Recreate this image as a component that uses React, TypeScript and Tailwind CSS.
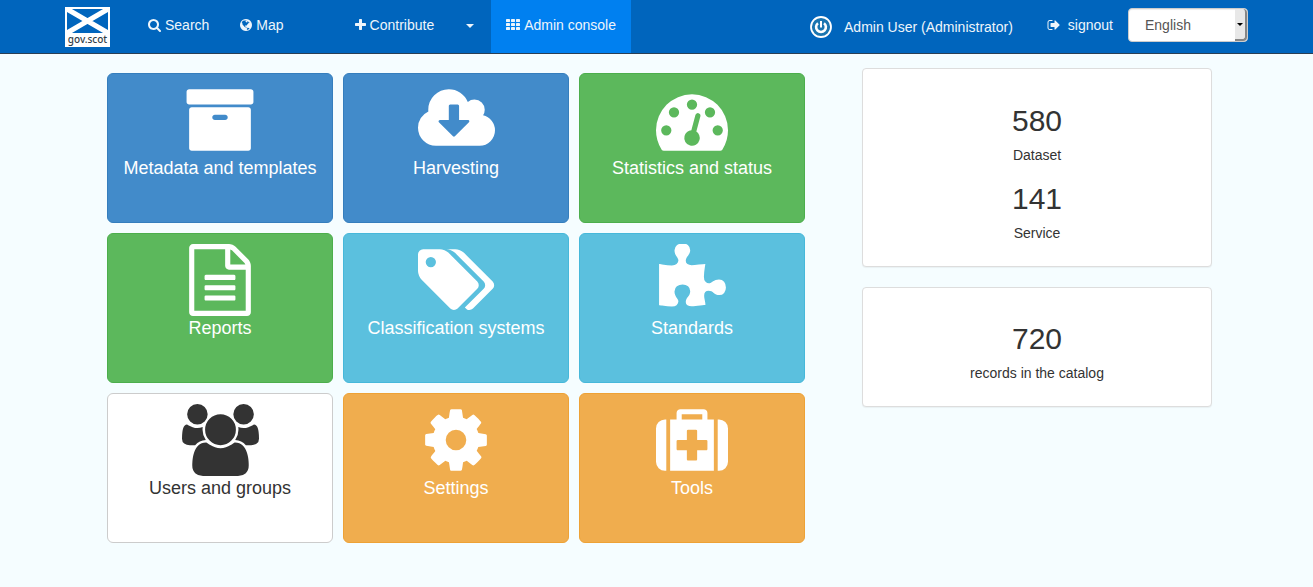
import type { ReactNode } from "react";

type Glyph = { box: string; d: string };

const glyphs = {
  search: {
    box: "64 0 1664 1792",
    d: "M1216 832q0-185-131.5-316.5t-316.5-131.5-316.5 131.5-131.5 316.5 131.5 316.5 316.5 131.5 316.5-131.5 131.5-316.5zm512 832q0 52-38 90t-90 38q-54 0-90-38l-343-342q-179 124-399 124-143 0-273.5-55.5t-225-150-150-225-55.5-273.5 55.5-273.5 150-225 225-150 273.5-55.5 273.5 55.5 225 150 150 225 55.5 273.5q0 220-124 399l343 343q37 37 37 90z",
  },
  globe: {
    box: "128 0 1536 1792",
    d: "M896 128q209 0 385.5 103t279.5 279.5 103 385.5-103 385.5-279.5 279.5-385.5 103-385.5-103-279.5-279.5-103-385.5 103-385.5 279.5-279.5 385.5-103zm274 521q-2 1-9.5 9.5t-13.5 9.5q2 0 4.5-5t5-11 3.5-7q6-7 22-15 14-6 52-12 34-8 51 11-2-2 9.5-13t14.5-12q3-2 15-4.5t15-7.5l2-22q-12 1-17.5-7t-6.5-21q0 2-6 8 0-7-4.5-8t-11.5 1-9 1q-10-3-15-7.5t-8-16.5-4-15q-2-5-9.5-10.5t-9.5-10.5q-1-2-2.5-5.5t-3-6.5-4-5.5-5.5-2.5-7 5-7.5 10-4.5 5q-3-2-6-1.5t-4.5 1-4.5 3-5 3.5q-3 2-8.5 3t-8.5 2q15-5-1-11-10-4-16-3 9-4 7.5-12t-8.5-14h5q-1-4-8.5-8.5t-17.5-8.5-13-6q-8-5-34-9.5t-33-.5q-5 6-4.5 10.5t4 14 3.5 12.5q1 6-5.5 13t-6.5 12q0 7 14 15.5t10 21.5q-3 8-16 16t-16 12q-5 8-1.5 18.5t10.5 16.5q2 2 1.5 4t-3.5 4.5-5.5 4-6.5 3.5l-3 2q-11 5-20.5-6t-13.5-26q-7-25-16-30-23-8-29 1-5-13-41-26-25-9-58-4 6-1 0-15-7-15-19-12 3-6 4-17.5t1-13.5q3-13 12-23 1-1 7-8.5t9.5-13.5.5-6q35 4 50-11 5-5 11.5-17t10.5-17q9-6 14-5.5t14.5 5.5 14.5 5q14 1 15.5-11t-7.5-20q12 1 3-17-4-7-8-9-12-4-27 5-8 4 2 8-1-1-9.5 10.5t-16.5 17.5-16-5q-1-1-5.5-13.5t-9.5-13.5q-8 0-16 15 3-8-11-15t-24-8q19-12-8-27-7-4-20.5-5t-19.5 4q-5 7-5.5 11.5t5 8 10.5 5.5 11.5 4 8.5 3q14 10 8 14-2 1-8.5 3.5t-11.5 4.5-6 4q-3 4 0 14t-2 14q-5-5-9-17.5t-7-16.5q7 9-25 6l-10-1q-4 0-16 2t-20.5 1-13.5-8q-4-8 0-20 1-4 4-2-4-3-11-9.5t-10-8.5q-46 15-94 41 6 1 12-1 5-2 13-6.5t10-5.5q34-14 42-7l5-5q14 16 20 25-7-4-30-1-20 6-22 12 7 12 5 18-4-3-11.5-10t-14.5-11-15-5q-16 0-22 1-146 80-235 222 7 7 12 8 4 1 5 9t2.5 11 11.5-3q9 8 3 19 1-1 44 27 19 17 21 21 3 11-10 18-1-2-9-9t-9-4q-3 5 .5 18.5t10.5 12.5q-7 0-9.5 16t-2.5 35.5-1 23.5l2 1q-3 12 5.5 34.5t21.5 19.5q-13 3 20 43 6 8 8 9 3 2 12 7.5t15 10 10 10.5q4 5 10 22.5t14 23.5q-2 6 9.5 20t10.5 23q-1 0-2.5 1t-2.5 1q3 7 15.5 14t15.5 13q1 3 2 10t3 11 8 2q2-20-24-62-15-25-17-29-3-5-5.5-15.5t-4.5-14.5q2 0 6 1.5t8.5 3.5 7.5 4 2 3q-3 7 2 17.5t12 18.5 17 19 12 13q6 6 14 19.5t0 13.5q9 0 20 10t17 20q5 8 8 26t5 24q2 7 8.5 13.5t12.5 9.5l16 8 13 7q5 2 18.5 10.5t21.5 11.5q10 4 16 4t14.5-2.5 13.5-3.5q15-2 29 15t21 21q36 19 55 11-2 1 .5 7.5t8 15.5 9 14.5 5.5 8.5q5 6 18 15t18 15q6-4 7-9-3 8 7 20t18 10q14-3 14-32-31 15-49-18 0-1-2.5-5.5t-4-8.5-2.5-8.5 0-7.5 5-3q9 0 10-3.5t-2-12.5-4-13q-1-8-11-20t-12-15q-5 9-16 8t-16-9q0 1-1.5 5.5t-1.5 6.5q-13 0-15-1 1-3 2.5-17.5t3.5-22.5q1-4 5.5-12t7.5-14.5 4-12.5-4.5-9.5-17.5-2.5q-19 1-26 20-1 3-3 10.5t-5 11.5-9 7q-7 3-24 2t-24-5q-13-8-22.5-29t-9.5-37q0-10 2.5-26.5t3-25-5.5-24.5q3-2 9-9.5t10-10.5q2-1 4.5-1.5t4.5 0 4-1.5 3-6q-1-1-4-3-3-3-4-3 7 3 28.5-1.5t27.5 1.5q15 11 22-2 0-1-2.5-9.5t-.5-13.5q5 27 29 9 3 3 15.5 5t17.5 5q3 2 7 5.5t5.5 4.5 5-.5 8.5-6.5q10 14 12 24 11 40 19 44 7 3 11 2t4.5-9.5 0-14-1.5-12.5l-1-8v-18l-1-8q-15-3-18.5-12t1.5-18.5 15-18.5q1-1 8-3.5t15.5-6.5 12.5-8q21-19 15-35 7 0 11-9-1 0-5-3t-7.5-5-4.5-2q9-5 2-16 5-3 7.5-11t7.5-10q9 12 21 2 7-8 1-16 5-7 20.5-10.5t18.5-9.5q7 2 8-2t1-12 3-12q4-5 15-9t13-5l17-11q3-4 0-4 18 2 31-11 10-11-6-20 3-6-3-9.5t-15-5.5q3-1 11.5-.5t10.5-1.5q15-10-7-16-17-5-43 12zm-163 877q206-36 351-189-3-3-12.5-4.5t-12.5-3.5q-18-7-24-8 1-7-2.5-13t-8-9-12.5-8-11-7q-2-2-7-6t-7-5.5-7.5-4.5-8.5-2-10 1l-3 1q-3 1-5.5 2.5t-5.5 3-4 3 0 2.5q-21-17-36-22-5-1-11-5.5t-10.5-7-10-1.5-11.5 7q-5 5-6 15t-2 13q-7-5 0-17.5t2-18.5q-3-6-10.5-4.5t-12 4.5-11.5 8.5-9 6.5-8.5 5.5-8.5 7.5q-3 4-6 12t-5 11q-2-4-11.5-6.5t-9.5-5.5q2 10 4 35t5 38q7 31-12 48-27 25-29 40-4 22 12 26 0 7-8 20.5t-7 21.5q0 6 2 16z",
  },
  plus: {
    box: "192 0 1408 1792",
    d: "M1600 736v192q0 40-28 68t-68 28h-416v416q0 40-28 68t-68 28h-192q-40 0-68-28t-28-68v-416h-416q-40 0-68-28t-28-68v-192q0-40 28-68t68-28h416v-416q0-40 28-68t68-28h192q40 0 68 28t28 68v416h416q40 0 68 28t28 68z",
  },
  signOut: {
    box: "0 0 1664 1792",
    d: "M704 1440q0 4 1 20t.5 26.5-3 23.5-10 19.5-20.5 6.5h-320q-119 0-203.5-84.5t-84.5-203.5v-704q0-119 84.5-203.5t203.5-84.5h320q13 0 22.5 9.5t9.5 22.5q0 4 1 20t.5 26.5-3 23.5-10 19.5-20.5 6.5h-320q-66 0-113 47t-47 113v704q0 66 47 113t113 47h312l11.5 1 11.5 3 8 5.5 7 9 2 13.5zm928-544q0 26-19 45l-544 544q-19 19-45 19t-45-19-19-45v-288h-448q-26 0-45-19t-19-45v-384q0-26 19-45t45-19h448v-288q0-26 19-45t45-19 45 19l544 544q19 19 19 45z",
  },
  archive: {
    box: "0 0 1792 1792",
    d: "M1088 832q0-26-19-45t-45-19h-256q-26 0-45 19t-19 45 19 45 45 19h256q26 0 45-19t19-45zm576-192v960q0 26-19 45t-45 19h-1408q-26 0-45-19t-19-45v-960q0-26 19-45t45-19h1408q26 0 45 19t19 45zm64-448v256q0 26-19 45t-45 19h-1536q-26 0-45-19t-19-45v-256q0-26 19-45t45-19h1536q26 0 45 19t19 45z",
  },
  cloudDownload: {
    box: "0 0 1920 1792",
    d: "M1280 928q0-14-9-23t-23-9h-224v-352q0-13-9.5-22.5t-22.5-9.5h-192q-13 0-22.5 9.5t-9.5 22.5v352h-224q-13 0-22.5 9.5t-9.5 22.5q0 14 9 23l352 352q9 9 23 9t23-9l351-351q10-12 10-24zm640 224q0 159-112.5 271.5t-271.5 112.5h-1088q-185 0-316.5-131.5t-131.5-316.5q0-130 70-240t188-165q-2-30-2-43 0-212 150-362t362-150q156 0 285.5 87t188.5 231q71-62 166-62 106 0 181 75t75 181q0 76-41 138 130 31 213.5 135.5t83.5 238.5z",
  },
  dashboard: {
    box: "0 0 1792 1792",
    d: "M384 1152q0-53-37.5-90.5t-90.5-37.5-90.5 37.5-37.5 90.5 37.5 90.5 90.5 37.5 90.5-37.5 37.5-90.5zm192-448q0-53-37.5-90.5t-90.5-37.5-90.5 37.5-37.5 90.5 37.5 90.5 90.5 37.5 90.5-37.5 37.5-90.5zm428 481l101-382q6-26-7.5-48.5t-38.5-29.5-48 6.5-30 39.5l-101 382q-60 5-107 43.5t-63 98.5q-20 77 20 146t117 89 146-20 89-117q16-60-6-117t-72-91zm660-33q0-53-37.5-90.5t-90.5-37.5-90.5 37.5-37.5 90.5 37.5 90.5 90.5 37.5 90.5-37.5 37.5-90.5zm-640-640q0-53-37.5-90.5t-90.5-37.5-90.5 37.5-37.5 90.5 37.5 90.5 90.5 37.5 90.5-37.5 37.5-90.5zm448 192q0-53-37.5-90.5t-90.5-37.5-90.5 37.5-37.5 90.5 37.5 90.5 90.5 37.5 90.5-37.5 37.5-90.5zm320 448q0 261-141 483-19 29-54 29h-1402q-35 0-54-29-141-221-141-483 0-182 71-348t191-286 286-191 348-71 348 71 286 191 191 286 71 348z",
  },
  fileText: {
    box: "128 0 1536 1792",
    d: "M1596 380q28 28 48 76t20 88v1152q0 40-28 68t-68 28h-1344q-40 0-68-28t-28-68v-1600q0-40 28-68t68-28h896q40 0 88 20t76 48zm-444-244v376h376q-10-29-22-41l-313-313q-12-12-41-22zm384 1528v-1024h-416q-40 0-68-28t-28-68v-416h-768v1536h1280zm-1024-864q0-14 9-23t23-9h704q14 0 23 9t9 23v64q0 14-9 23t-23 9h-704q-14 0-23-9t-9-23v-64zm736 224q14 0 23 9t9 23v64q0 14-9 23t-23 9h-704q-14 0-23-9t-9-23v-64q0-14 9-23t23-9h704zm0 256q14 0 23 9t9 23v64q0 14-9 23t-23 9h-704q-14 0-23-9t-9-23v-64q0-14 9-23t23-9h704z",
  },
  tags: {
    box: "0 0 1920 1792",
    d: "M448 448q0-53-37.5-90.5t-90.5-37.5-90.5 37.5-37.5 90.5 37.5 90.5 90.5 37.5 90.5-37.5 37.5-90.5zm1067 576q0 53-37 90l-491 492q-39 37-91 37-53 0-90-37l-715-716q-38-37-64.5-101t-26.5-117v-416q0-52 38-90t90-38h416q53 0 117 26.5t102 64.5l715 714q37 39 37 91zm384 0q0 53-37 90l-491 492q-39 37-91 37-36 0-59-14t-53-45l470-470q37-37 37-90 0-52-37-91l-715-714q-38-38-102-64.5t-117-26.5h224q53 0 117 26.5t102 64.5l715 714q37 39 37 91z",
  },
  puzzle: {
    box: "91 0 1664 1792",
    d: "M1755 1083q0 81-44.5 135t-123.5 54q-41 0-77.5-17.5t-59-38-56.5-38-71-17.5q-110 0-110 124 0 39 16 115t15 115v5q-22 0-33 1-34 3-97.5 11.5t-115.5 13.5-98 5q-61 0-103-26.5t-42-83.5q0-37 17.5-71t38-56.5 38-59 17.5-77.5q0-79-54-123.5t-135-44.5q-84 0-143 45.5t-59 127.5q0 43 15 83t33.5 64.5 33.5 53 15 50.5q0 45-46 89-37 35-117 35-95 0-245-24-9-2-27.5-4t-27.5-4l-13-2q-1 0-3-1-2 0-2-1v-1024q2 1 17.5 3.5t34 5 21.5 3.5q150 24 245 24 80 0 117-35 46-44 46-89 0-22-15-50.5t-33.5-53-33.5-64.5-15-83q0-82 59-127.5t144-45.5q80 0 134 44.5t54 123.5q0 41-17.5 77.5t-38 59-38 56.5-17.5 71q0 57 42 83.5t103 26.5q64 0 180-15t163-17v2q-1 2-3.5 17.5t-5 34-3.5 21.5q-24 150-24 245 0 80 35 117 44 46 89 46 22 0 50.5-15t53-33.5 64.5-33.5 83-15q82 0 127.5 59t45.5 143z",
  },
  users: {
    box: "64 0 1920 1792",
    d: "M657 896q-162 5-265 128h-134q-82 0-138-40.5t-56-118.5q0-353 124-353 6 0 43.5 21t97.5 42.5 119 21.5q67 0 133-23-5 37-5 66 0 139 81 256zm1071 637q0 120-73 189.5t-194 69.5h-874q-121 0-194-69.5t-73-189.5q0-53 3.5-103.5t14-109 26.5-108.5 43-97.5 62-81 85.5-53.5 111.5-20q10 0 43 21.5t73 48 107 48 135 21.5 135-21.5 107-48 73-48 43-21.5q61 0 111.5 20t85.5 53.5 62 81 43 97.5 26.5 108.5 14 109 3.5 103.5zm-1024-1277q0 106-75 181t-181 75-181-75-75-181 75-181 181-75 181 75 75 181zm704 384q0 159-112.5 271.5t-271.5 112.5-271.5-112.5-112.5-271.5 112.5-271.5 271.5-112.5 271.5 112.5 112.5 271.5zm576 225q0 78-56 118.5t-138 40.5h-134q-103-123-265-128 81-117 81-256 0-29-5-66 66 23 133 23 59 0 119-21.5t97.5-42.5 43.5-21q124 0 124 353zm-128-609q0 106-75 181t-181 75-181-75-75-181 75-181 181-75 181 75 75 181z",
  },
  cog: {
    box: "128 0 1536 1792",
    d: "M1152 896q0-106-75-181t-181-75-181 75-75 181 75 181 181 75 181-75 75-181zm512-109v222q0 12-8 23t-20 13l-185 28q-19 54-39 91 35 50 107 138 10 12 10 25t-9 23q-27 37-99 108t-94 71q-12 0-26-9l-138-108q-44 23-91 38-16 136-29 186-7 28-36 28h-222q-14 0-24.5-8.5t-11.5-21.5l-28-184q-49-16-90-37l-141 107q-10 9-25 9-14 0-25-11-126-114-165-168-7-10-7-23 0-12 8-23 15-21 51-66.5t54-70.5q-27-50-41-99l-183-27q-13-2-21-12.5t-8-23.5v-222q0-12 8-23t19-13l186-28q14-46 39-92-40-57-107-138-10-12-10-24 0-10 9-23 26-36 98.5-107.5t94.5-71.5q13 0 26 10l138 107q44-23 91-38 16-136 29-186 7-28 36-28h222q14 0 24.5 8.5t11.5 21.5l28 184q49 16 90 37l142-107q9-9 24-9 13 0 25 10 129 119 165 170 7 8 7 22 0 12-8 23-15 21-51 66.5t-54 70.5q26 50 41 98l183 28q13 2 21 12.5t8 23.5z",
  },
  medkit: {
    box: "0 0 1792 1792",
    d: "M1280 1120v-192q0-14-9-23t-23-9h-224v-224q0-14-9-23t-23-9h-192q-14 0-23 9t-9 23v224h-224q-14 0-23 9t-9 23v192q0 14 9 23t23 9h224v224q0 14 9 23t23 9h192q14 0 23-9t9-23v-224h224q14 0 23-9t9-23zm-640-736h512v-128h-512v128zm-384 0v1280h-32q-92 0-158-66t-66-158v-832q0-92 66-158t158-66h32zm1184 0v1280h-1088v-1280h160v-160q0-40 28-68t68-28h576q40 0 68 28t28 68v160h160zm352 224v832q0 92-66 158t-158 66h-32v-1280h32q92 0 158 66t66 158z",
  },
} satisfies Record<string, Glyph>;

function Icon({ glyph, className }: { glyph: Glyph; className: string }) {
  return (
    <svg viewBox={glyph.box} className={className} fill="currentColor" aria-hidden="true">
      <path d={glyph.d} />
    </svg>
  );
}

function GridIcon() {
  return (
    <svg viewBox="0 0 14 14" className="h-3.5 w-3.5" fill="currentColor" aria-hidden="true">
      {[1, 5, 9].map((y) =>
        [0, 5, 10].map((x) => <rect key={`${x}-${y}`} x={x} y={y} width="4" height="3" rx="0.4" />),
      )}
    </svg>
  );
}

function Logo() {
  return (
    <a href="#home" className="flex h-10 w-[45px] flex-col items-center bg-white pt-0.5">
      <svg viewBox="0 0 41 24" className="h-6 w-[41px] shrink-0" aria-hidden="true">
        <rect width="41" height="24" fill="#0065bd" />
        <path d="M0 0L41 24M41 0L0 24" stroke="#fff" strokeWidth="5" />
      </svg>
      <span className="font-['Noto_Sans',sans-serif] text-[10px] leading-3 font-medium text-[#333e48]">gov.scot</span>
    </a>
  );
}

function PowerBadge() {
  return (
    <svg viewBox="0 0 22 22" className="h-[22px] w-[22px]" fill="none" aria-hidden="true">
      <circle cx="11" cy="11" r="10" fill="#1a75b0" stroke="#fff" strokeWidth="1.8" />
      <path d="M8 7.2A4.9 4.9 0 1 0 14 7.2" stroke="#fff" strokeWidth="2.6" />
      <path d="M11 5v6.5" stroke="#fff" strokeWidth="2" />
    </svg>
  );
}

function NavLink({ href, className = "", children }: { href: string; className?: string; children: ReactNode }) {
  return (
    <a href={href} className={`flex items-center gap-1 px-[15px] pt-[15px] pb-[18px] ${className}`}>
      {children}
    </a>
  );
}

const tiles = [
  { label: "Metadata and templates", glyph: glyphs.archive, icon: "w-[72px]", tone: "border-[#357ebd] bg-[#428bca] text-white" },
  { label: "Harvesting", glyph: glyphs.cloudDownload, icon: "w-[77px]", tone: "border-[#357ebd] bg-[#428bca] text-white" },
  { label: "Statistics and status", glyph: glyphs.dashboard, icon: "w-[72px]", tone: "border-[#4cae4c] bg-[#5cb85c] text-white" },
  { label: "Reports", glyph: glyphs.fileText, icon: "w-[62px]", tone: "border-[#4cae4c] bg-[#5cb85c] text-white" },
  { label: "Classification systems", glyph: glyphs.tags, icon: "w-[77px]", tone: "border-[#46b8da] bg-[#5bc0de] text-white" },
  { label: "Standards", glyph: glyphs.puzzle, icon: "w-[67px]", tone: "border-[#46b8da] bg-[#5bc0de] text-white" },
  { label: "Users and groups", glyph: glyphs.users, icon: "w-[77px]", tone: "border-[#ccc] bg-white text-[#333]" },
  { label: "Settings", glyph: glyphs.cog, icon: "w-[62px]", tone: "border-[#eea236] bg-[#f0ad4e] text-white" },
  { label: "Tools", glyph: glyphs.medkit, icon: "w-[72px]", tone: "border-[#eea236] bg-[#f0ad4e] text-white" },
];

function Stat({ value, label }: { value: string; label: string }) {
  return (
    <div className="flex flex-col items-center">
      <span className="text-[30px] leading-[33px]">{value}</span>
      <span className="mt-2 leading-5">{label}</span>
    </div>
  );
}

function Panel({ className, children }: { className: string; children: ReactNode }) {
  return (
    <section className={`flex flex-col rounded border border-[#ddd] bg-white px-4 shadow-[0_1px_1px_rgba(0,0,0,0.05)] ${className}`}>
      {children}
    </section>
  );
}

export default function App() {
  return (
    <div className="min-h-screen bg-[#f5fdff] font-['Liberation_Sans',Arial,sans-serif] text-sm leading-5 text-[#333]">
      <header className="flex items-start justify-between border-b border-[#2a3f55] bg-[#0065bd] px-[65px] text-[#eef5fb]">
        <div className="flex items-start">
          <div className="pt-[7px]">
            <Logo />
          </div>
          <nav className="ml-[23px] flex gap-px">
            <NavLink href="#search">
              <Icon glyph={glyphs.search} className="h-3.5 w-[13px]" />
              Search
            </NavLink>
            <NavLink href="#map">
              <Icon glyph={glyphs.globe} className="h-3.5 w-3" />
              Map
            </NavLink>
            <NavLink href="#contribute" className="ml-10">
              <Icon glyph={glyphs.plus} className="h-3.5 w-[11px]" />
              Contribute
            </NavLink>
            <button type="button" aria-label="More contribute actions" className="px-4 pb-0.5">
              <svg viewBox="0 0 8 4" className="h-1 w-2" fill="currentColor" aria-hidden="true">
                <path d="M0 0h8L4 4z" />
              </svg>
            </button>
            <NavLink href="#admin" className="bg-[#0080f0]">
              <GridIcon />
              Admin console
            </NavLink>
          </nav>
        </div>
        <div className="flex items-start">
          <a href="#user" className="flex items-center gap-3 pt-4 pb-[15px]">
            <PowerBadge />
            Admin User (Administrator)
          </a>
          <a href="#signout" className="ml-[34px] flex items-center gap-2 pt-[15px]">
            <Icon glyph={glyphs.signOut} className="h-3.5 w-[13px]" />
            signout
          </a>
          <div className="relative mt-2 ml-[15px]">
            <select
              aria-label="Language"
              className="block h-[34px] w-[120px] appearance-none rounded border border-[#ccc] bg-white px-4 text-sm text-[#555] shadow-[inset_0_1px_1px_rgba(0,0,0,0.075)]"
            >
              <option>English</option>
            </select>
            <span className="pointer-events-none absolute inset-y-px right-px flex w-3 items-center justify-center rounded-r-sm border-r-2 border-b-2 border-[#868686] bg-[#e8e8e8]">
              <svg viewBox="0 0 6 3" className="h-[3px] w-1.5" fill="#000" aria-hidden="true">
                <path d="M0 0h6L3 3z" />
              </svg>
            </span>
          </div>
        </div>
      </header>

      <main className="flex items-start gap-[57px] pt-3.5 pr-[101px] pb-11 pl-[107px]">
        <div className="grid flex-1 grid-cols-3 gap-2.5 pt-[5px]">
          {tiles.map((tile) => (
            <a
              key={tile.label}
              href="#section"
              className={`flex min-h-[150px] flex-col items-center rounded-md border px-3 pt-2.5 text-center text-lg leading-6 ${tile.tone}`}
            >
              <Icon glyph={tile.glyph} className={`h-[72px] ${tile.icon}`} />
              {tile.label}
            </a>
          ))}
        </div>
        <aside className="flex w-[350px] flex-col gap-5">
          <Panel className="gap-[17px] pt-[35px] pb-[23px]">
            <Stat value="580" label="Dataset" />
            <Stat value="141" label="Service" />
          </Panel>
          <Panel className="pt-[34px] pb-[23px]">
            <Stat value="720" label="records in the catalog" />
          </Panel>
        </aside>
      </main>
    </div>
  );
}
